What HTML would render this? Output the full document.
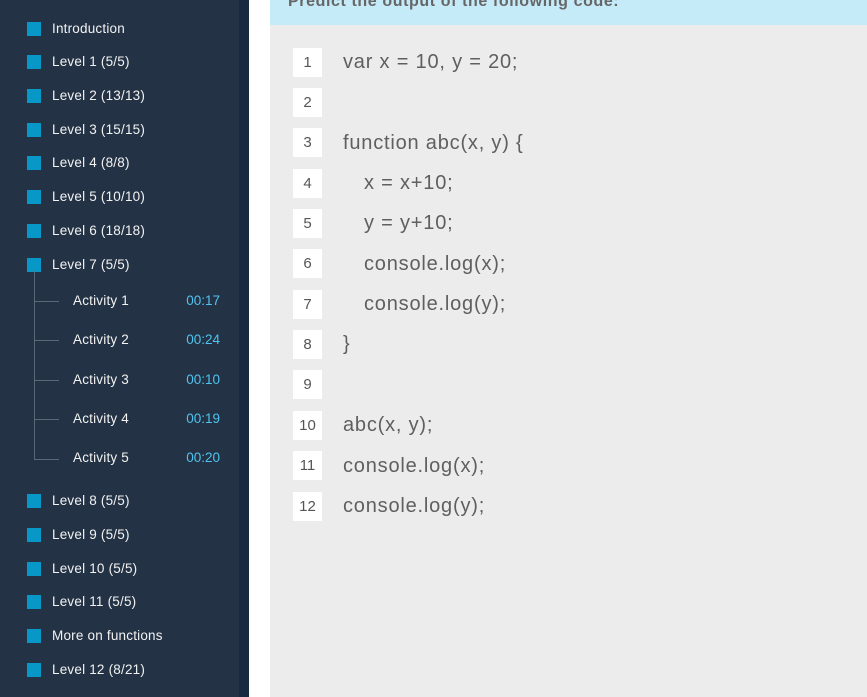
<!DOCTYPE html>
<html><head><style>
body{margin:0;width:867px;height:697px;overflow:hidden;background:#fff;font-family:"Liberation Sans",sans-serif;position:relative}
.sb{position:absolute;left:0;top:0;width:239px;height:697px;background:#233345}
.st{position:absolute;left:239px;top:0;width:10px;height:697px;background:#182a40}
.main{position:absolute;left:270px;top:0;width:597px;height:697px;background:#ececec}
.ban{position:absolute;left:0;top:0;width:597px;height:25px;background:#c5ebf9;color:#555;font-size:16px;letter-spacing:0.6px;line-height:8px;overflow:hidden}
.ban span{position:absolute;left:18px;top:-2px;font-weight:bold;color:#666}
.it{position:absolute;left:27px;color:#f2f2f2;font-size:13.5px;height:16px;line-height:16px;letter-spacing:0.2px}
.it i{position:absolute;left:0;top:1px;width:14px;height:14px;background:#0898c8}
.it span{position:absolute;left:25px;white-space:nowrap}
.ac{position:absolute;left:73px;color:#f2f2f2;font-size:13.5px;line-height:16px;white-space:nowrap;letter-spacing:0.2px}
.tm{position:absolute;right:19px;color:#4fc3ef;font-size:13.5px;line-height:16px}
.vl{position:absolute;left:34px;top:271px;width:1px;height:188px;background:#5a6777}
.hl{position:absolute;left:34px;width:25px;height:1px;background:#5a6777}
.ln{position:absolute;left:23px;width:29px;height:29px;background:#fff;color:#555;font-size:15px;text-align:center;line-height:29px}
.cd{position:absolute;left:73px;color:#5f5f5f;font-size:20px;line-height:29px;white-space:pre;letter-spacing:0.8px}
.in{padding-left:21px}
</style></head><body>
<div class="sb">
<div class="it" style="top:21px"><i></i><span>Introduction</span></div>
<div class="it" style="top:54px"><i></i><span>Level 1 (5/5)</span></div>
<div class="it" style="top:88px"><i></i><span>Level 2 (13/13)</span></div>
<div class="it" style="top:122px"><i></i><span>Level 3 (15/15)</span></div>
<div class="it" style="top:155px"><i></i><span>Level 4 (8/8)</span></div>
<div class="it" style="top:189px"><i></i><span>Level 5 (10/10)</span></div>
<div class="it" style="top:223px"><i></i><span>Level 6 (18/18)</span></div>
<div class="it" style="top:257px"><i></i><span>Level 7 (5/5)</span></div>
<div class="vl"></div>
<div class="hl" style="top:301px"></div><div class="hl" style="top:340px"></div><div class="hl" style="top:380px"></div><div class="hl" style="top:419px"></div><div class="hl" style="top:459px"></div>
<div class="ac" style="top:293px">Activity 1</div><div class="tm" style="top:293px">00:17</div>
<div class="ac" style="top:332px">Activity 2</div><div class="tm" style="top:332px">00:24</div>
<div class="ac" style="top:372px">Activity 3</div><div class="tm" style="top:372px">00:10</div>
<div class="ac" style="top:411px">Activity 4</div><div class="tm" style="top:411px">00:19</div>
<div class="ac" style="top:450px">Activity 5</div><div class="tm" style="top:450px">00:20</div>
<div class="it" style="top:493px"><i></i><span>Level 8 (5/5)</span></div>
<div class="it" style="top:527px"><i></i><span>Level 9 (5/5)</span></div>
<div class="it" style="top:561px"><i></i><span>Level 10 (5/5)</span></div>
<div class="it" style="top:594px"><i></i><span>Level 11 (5/5)</span></div>
<div class="it" style="top:628px"><i></i><span>More on functions</span></div>
<div class="it" style="top:662px"><i></i><span>Level 12 (8/21)</span></div>
</div>
<div class="st"></div>
<div class="main">
<div class="ban"><span>Predict the output of the following code:</span></div>
<div class="ln" style="top:48px">1</div><div class="cd" style="top:48px">var x = 10, y = 20;</div>
<div class="ln" style="top:88px">2</div>
<div class="ln" style="top:128px">3</div><div class="cd" style="top:129px">function abc(x, y) {</div>
<div class="ln" style="top:169px">4</div><div class="cd in" style="top:169px">x = x+10;</div>
<div class="ln" style="top:209px">5</div><div class="cd in" style="top:209px">y = y+10;</div>
<div class="ln" style="top:249px">6</div><div class="cd in" style="top:250px">console.log(x);</div>
<div class="ln" style="top:290px">7</div><div class="cd in" style="top:290px">console.log(y);</div>
<div class="ln" style="top:330px">8</div><div class="cd" style="top:330px">}</div>
<div class="ln" style="top:370px">9</div>
<div class="ln" style="top:411px">10</div><div class="cd" style="top:411px">abc(x, y);</div>
<div class="ln" style="top:451px">11</div><div class="cd" style="top:452px">console.log(x);</div>
<div class="ln" style="top:492px">12</div><div class="cd" style="top:492px">console.log(y);</div>
</div>
</body></html>
